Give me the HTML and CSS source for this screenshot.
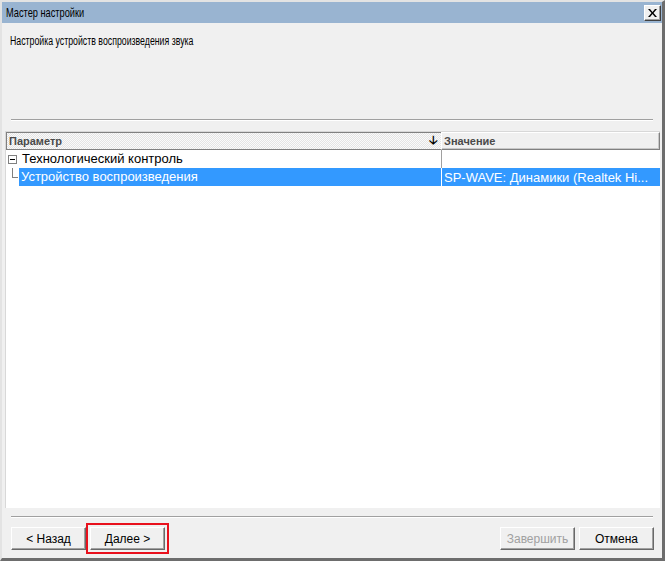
FILE: index.html
```html
<!DOCTYPE html>
<html lang="ru">
<head>
  <meta charset="UTF-8">
  <title>Мастер настройки</title>
  <link rel="stylesheet" href="styles.css">
</head>
<body>
  <div class="window">
    <div class="titlebar">
      <span class="title">Мастер настройки</span>
      <button class="close-btn">
        <svg width="9" height="8" viewBox="0 0 9 8"><path d="M0 0h2l2.5 3 2.5-3h2l-3.5 4 3.5 4h-2l-2.5-3-2.5 3h-2l3.5-4z" fill="#000"/></svg>
      </button>
    </div>

    <div class="intro">
      <p class="subtitle">Настройка устройств воспроизведения звука</p>
    </div>

    <div class="divider"></div>

    <!-- property grid -->
    <div class="grid">
      <div class="grid-head">
        <div class="col-param head-cell sorted">
          <span>Параметр</span>
          <span class="sort-arrow">&#129123;</span>
        </div>
        <div class="col-value head-cell raised">Значение</div>
      </div>
      <div class="grid-row">
        <div class="col-param cell">
          <span class="tree-box"></span>
          <span class="row-text">Технологический контроль</span>
        </div>
        <div class="col-value cell"></div>
      </div>
      <div class="grid-row selected">
        <div class="col-param cell">
          <span class="tree-line"></span>
          <span class="row-text">Устройство воспроизведения</span>
        </div>
        <div class="col-value cell">SP-WAVE: Динамики (Realtek Hi...</div>
      </div>
    </div>

    <div class="divider bottom"></div>

    <div class="buttons">
      <button class="btn">&lt; Назад</button>
      <span class="focus-mark"><button class="btn">Далее &gt;</button></span>
      <span class="spacer"></span>
      <button class="btn" disabled>Завершить</button>
      <button class="btn">Отмена</button>
    </div>
  </div>
</body>
</html>
```

FILE: styles.css
```css
body {
  margin: 0;
  font-family: "Liberation Sans", Arial, sans-serif;
  font-size: 11px;
  color: #000;
  background: #f0f0f0;
}

.window {
  width: 665px;
  height: 561px;
  box-sizing: border-box;
  display: flex;
  flex-direction: column;
  background: #f0f0f0;
  border-left: 2px solid #e3e3e3;
  border-top: 2px solid #e3e3e3;
  border-right: 3px solid #6d6d6d;
  border-bottom: 3px solid #6d6d6d;
}

.titlebar {
  height: 21px;
  background-color: #99b4d1;
  display: flex;
  align-items: center;
  justify-content: space-between;
  padding: 0 1px 0 4px;
}

/* the dialog font is narrower than Arial */
.title {
  display: inline-block;
  font-size: 13px;
  transform: scaleX(0.71);
  transform-origin: left center;
}

.close-btn {
  width: 17px;
  height: 16px;
  padding: 0;
  margin: 0;
  display: flex;
  align-items: center;
  justify-content: center;
  background: #f0f0f0;
  border: 1px solid;
  border-color: #fff #404040 #404040 #fff;
  box-shadow: inset -1px -1px 0 #a0a0a0;
}

.intro {
  height: 96px;
  padding: 11px 0 0 8px;
  box-sizing: border-box;
}

.subtitle {
  margin: 0;
  display: inline-block;
  font-size: 12px;
  transform: scaleX(0.73);
  transform-origin: left center;
}

.divider {
  margin: 0 9px 0 9px;
  border-top: 1px solid #a0a0a0;
  border-bottom: 1px solid #fff;
}

.grid {
  flex: 1;
  margin: 10px 0 8px 3px;
  width: 655px;
  background: #fff;
  border-left: 1px solid #d8d8d8;
  border-top: 1px solid #d8d8d8;
  box-sizing: border-box;
}

.grid-head {
  display: flex;
  height: 18px;
}

.head-cell {
  box-sizing: border-box;
  font-weight: bold;
  color: #4a4a4a;
  display: flex;
  align-items: center;
  padding-left: 2px;
}

.col-param {
  width: 435px;
  box-sizing: border-box;
}

.col-value {
  flex: 1;
  box-sizing: border-box;
}

.sorted {
  justify-content: space-between;
  border: 1px solid #808080;
  border-right: none;
  background-color: #fafafa;
  background-image: linear-gradient(45deg, #e4e4e4 25%, transparent 25%, transparent 75%, #e4e4e4 75%),
    linear-gradient(45deg, #e4e4e4 25%, transparent 25%, transparent 75%, #e4e4e4 75%);
  background-size: 2px 2px;
  background-position: 0 0, 1px 1px;
}

.sort-arrow {
  font-size: 12px;
  font-weight: bold;
  color: #000;
  margin-right: 3px;
  font-family: "DejaVu Sans", sans-serif;
}

.raised {
  background: #f0f0f0;
  border: 1px solid;
  border-color: #fff #808080 #808080 #fff;
  box-shadow: inset -1px -1px 0 #c8c8c8;
}

.grid-row {
  display: flex;
  height: 18px;
  font-size: 13px;
}

.cell {
  display: flex;
  align-items: center;
  position: relative;
  white-space: nowrap;
  overflow: hidden;
}

.grid-row .col-value {
  border-left: 1px solid #a0a0a0;
  padding-left: 2px;
}

.row-text {
  padding: 0 2px;
  height: 18px;
  line-height: 18px;
}

.tree-box {
  width: 7px;
  height: 7px;
  margin: 0 3px 0 2px;
  border: 1px solid #808080;
  position: relative;
}

.tree-box::after {
  content: "";
  position: absolute;
  left: 1px;
  top: 3px;
  width: 5px;
  border-top: 1px solid #000;
}

.tree-line {
  width: 5px;
  height: 14px;
  margin: -14px 1px 0 6px;
  border-left: 1px solid #808080;
  border-bottom: 1px solid #808080;
}

.selected .row-text,
.selected .col-value {
  background: #3399ff;
  color: #fff;
}

.selected .row-text {
  flex: 1;
}

.selected .col-value {
  border-left-color: #fff;
}

.buttons {
  display: flex;
  align-items: flex-start;
  gap: 4px;
  padding: 9px 8px 0 9px;
  height: 40px;
  box-sizing: border-box;
}

.spacer {
  flex: 1;
}

.btn {
  width: 75px;
  height: 23px;
  font-family: "Liberation Sans", Arial, sans-serif;
  font-size: 12px;
  background: #f0f0f0;
  border: 1px solid;
  border-color: #fff #696969 #696969 #fff;
  box-shadow: inset -1px -1px 0 #a0a0a0;
  padding: 0;
}

.btn:disabled {
  color: #a0a0a0;
}

.focus-mark {
  display: flex;
  border: 2px solid #e8101c;
  padding: 2px;
  margin: -4px -4px 0 -4px;
}
```
